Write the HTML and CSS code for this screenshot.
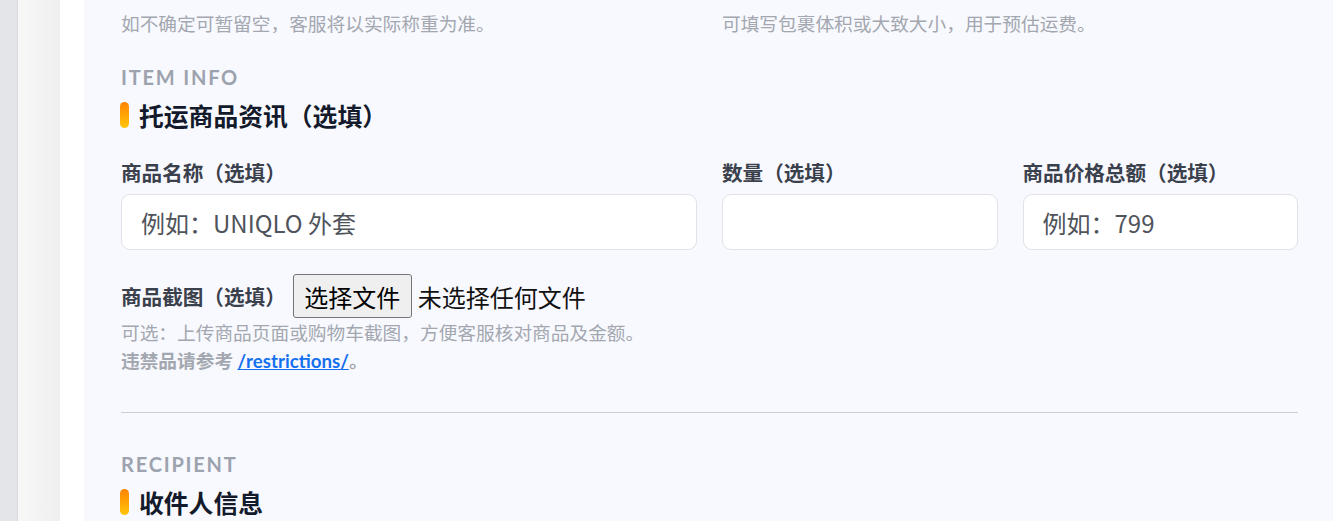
FILE: index.html
```html
<!DOCTYPE html>
<html lang="zh-CN">
<head>
<meta charset="utf-8">
<title>托运商品资讯</title>
<link rel="stylesheet" href="styles.css">
</head>
<body>
<div class="page">
  <div class="rail"></div>
  <div class="shade"></div>
  <div class="gutter"></div>
  <main class="panel">
    <div class="grid2 top-hints">
      <p class="hint">如不确定可暂留空，客服将以实际称重为准。</p>
      <p class="hint">可填写包裹体积或大致大小，用于预估运费。</p>
    </div>

    <section class="section">
      <div class="kicker">ITEM INFO</div>
      <h2 class="title"><span class="bar"></span>托运商品资讯（选填）</h2>

      <div class="grid2 fields">
        <div class="field">
          <label class="label">商品名称（选填）</label>
          <input class="input" type="text" placeholder="例如：UNIQLO 外套">
        </div>
        <div class="grid2 sub">
          <div class="field">
            <label class="label">数量（选填）</label>
            <input class="input" type="text">
          </div>
          <div class="field">
            <label class="label">商品价格总额（选填）</label>
            <input class="input" type="text" placeholder="例如：799">
          </div>
        </div>
      </div>

      <div class="file-row">
        <label class="label">商品截图（选填）</label>
        <span class="file"><span class="file-btn">选择文件</span><span class="file-name">未选择任何文件</span></span>
      </div>
      <p class="hint">可选：上传商品页面或购物车截图，方便客服核对商品及金额。</p>
      <p class="hint strong">违禁品请参考 <a class="link" href="#">/restrictions/</a>。</p>
    </section>

    <hr class="divider">

    <section class="section">
      <div class="kicker">RECIPIENT</div>
      <h2 class="title"><span class="bar"></span>收件人信息</h2>
    </section>
  </main>
</div>
</body>
</html>
```

FILE: styles.css
```css
html, body {
  margin: 0;
  padding: 0;
  height: 100%;
  overflow: hidden;
}
body {
  font-family: "Lato", "Noto Sans CJK SC", sans-serif;
  background: #f8f9fe;
}
.page {
  display: flex;
  min-height: 100%;
}
.rail {
  width: 17px;
  flex: none;
  background: #e4e5e8;
  border-right: 1px solid #d9dadd;
}
.shade {
  width: 42px;
  flex: none;
  background: linear-gradient(to right, #f8f8f8, #efefef);
}
.gutter {
  width: 24px;
  flex: none;
  background: #ffffff;
}
.panel {
  flex: 1;
  background: #f8f9fe;
  padding: 9px 35px 0 37px;
}
.grid2 {
  display: grid;
  grid-template-columns: 1fr 1fr;
  column-gap: 25px;
}
.hint {
  margin: 0;
  font-family: "Noto Sans CJK SC", sans-serif;
  font-size: 18.7px;
  line-height: 28px;
  color: #a3a7b0;
}
.hint.strong {
  font-weight: 700;
}
.link {
  color: #1570ef;
  text-decoration: underline;
  font-family: "Lato", "Noto Sans CJK SC", sans-serif;
}
.section {
  margin: 0;
}
.kicker {
  margin-top: 28px;
  font-family: "Lato", sans-serif;
  font-weight: 700;
  font-size: 20px;
  line-height: 24px;
  letter-spacing: 1.8px;
  color: #9ca2ae;
}
.title {
  display: flex;
  align-items: center;
  gap: 10px;
  margin: 10px 0 0;
  font-family: "Noto Sans CJK SC", sans-serif;
  font-weight: 700;
  font-size: 24.8px;
  line-height: 32px;
  color: #131a2b;
}
.bar {
  width: 9px;
  height: 26px;
  border-radius: 5px;
  background: linear-gradient(to bottom, #ff8300, #ffc60a);
  flex: none;
  margin-left: -1px;
}
.fields {
  margin-top: 27px;
}
.field {
  display: flex;
  flex-direction: column;
  gap: 8px;
}
.label {
  font-family: "Noto Sans CJK SC", sans-serif;
  font-weight: 700;
  font-size: 20.6px;
  line-height: 28px;
  color: #3a404c;
}
.input {
  box-sizing: border-box;
  height: 56px;
  width: 100%;
  border: 1px solid #dfe2e8;
  border-radius: 9px;
  background: #ffffff;
  padding: 0 19px;
  font-family: "Noto Sans CJK SC", sans-serif;
  font-size: 24px;
  color: #222;
}
.input::placeholder {
  color: #4f535b;
}
.file-row {
  display: flex;
  align-items: center;
  gap: 7px;
  margin-top: 24px;
  height: 44px;
}
.file {
  display: flex;
  align-items: center;
  gap: 6px;
  font-family: "Noto Sans CJK SC", sans-serif;
  font-size: 24px;
  color: #111;
}
.file-btn {
  box-sizing: border-box;
  height: 44px;
  width: 119px;
  display: flex;
  align-items: center;
  justify-content: center;
  background: #efefef;
  border: 1px solid #767676;
  border-radius: 3px;
  color: #000;
}
.divider {
  margin: 37px 0 0;
  border: 0;
  border-top: 1px solid #cbcdd3;
}
.divider + .section .kicker {
  margin-top: 39px;
}
```
